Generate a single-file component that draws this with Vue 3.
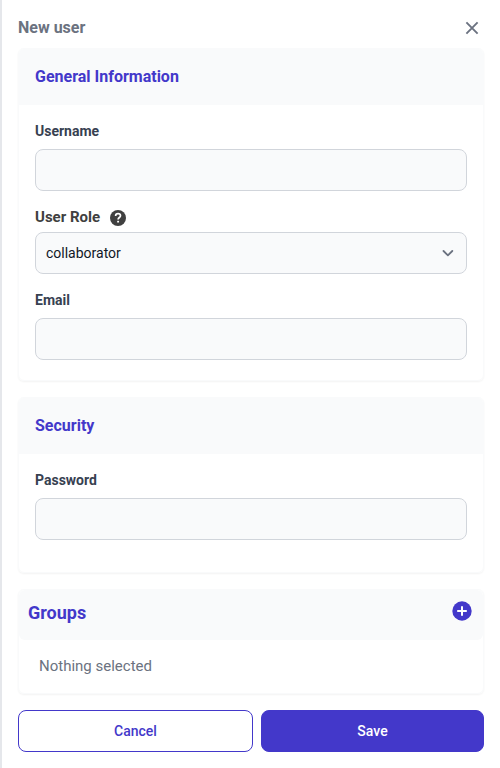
<script setup>
import { ref } from 'vue'

const username = ref('')
const email = ref('')
const password = ref('')
const role = ref('collaborator')
</script>

<template>
  <form class="drawer" @submit.prevent>
    <header class="top">
      <h5>New user</h5>
      <button type="button" class="close">
        <svg width="20" height="20" viewBox="0 0 20 20" fill="none" stroke="currentColor" stroke-width="1.9">
          <path d="M4.4 4.4 15.6 15.6M15.6 4.4 4.4 15.6" />
        </svg>
      </button>
    </header>

    <section class="card general">
      <h2 class="heading">General Information</h2>
      <div class="body">
        <label class="label" for="username">Username</label>
        <input id="username" v-model="username" class="control" type="text" />
        <div class="role-label">
          <span>User Role</span>
          <svg width="16" height="16" viewBox="0 0 16 16">
            <circle cx="8" cy="8" r="8" fill="#404040" />
            <path d="M5.600 6C5.600 4.500 6.600 3.700 8.050 3.700c1.450 0 2.450.8 2.450 2.050 0 1.750-2.400 1.750-2.400 3.650" fill="none" stroke="#fff" stroke-width="1.700" />
            <rect x="7.150" y="10.700" width="1.900" height="1.900" rx="0.500" fill="#fff" />
          </svg>
        </div>
        <div class="control select">
          <span>{{ role }}</span>
          <svg width="12" height="8" viewBox="0 0 12 8" fill="none" stroke="#6b7280" stroke-width="1.800" stroke-linecap="round" stroke-linejoin="round">
            <path d="M1.500 2 5.900 6.300l4.400-4.300" />
          </svg>
        </div>
        <label class="label email" for="email">Email</label>
        <input id="email" v-model="email" class="control" type="text" />
      </div>
    </section>

    <section class="card security">
      <h2 class="heading">Security</h2>
      <div class="body">
        <label class="label" for="password">Password</label>
        <input id="password" v-model="password" class="control" type="password" />
      </div>
    </section>

    <section class="card groups">
      <div class="groups-head">
        <h2>Groups</h2>
        <button type="button" class="add">
          <svg width="20" height="20" viewBox="0 0 20 20">
            <circle cx="10" cy="10" r="9.700" fill="#4338ca" />
            <path d="M10 5.200v9.600M5.200 10h9.600" stroke="#fff" stroke-width="2" />
          </svg>
        </button>
      </div>
      <p>Nothing selected</p>
    </section>

    <footer class="actions">
      <button type="button" class="button cancel">Cancel</button>
      <button type="submit" class="button save">Save</button>
    </footer>
  </form>
</template>

<style>
body {
  background: #fff;
}
</style>

<style scoped>
* {
  box-sizing: border-box;
  margin: 0;
}

.drawer {
  height: 768px;
  padding: 16px;
  border-left: 2px solid #e5e7eb;
  overflow: hidden;
  font: 14px/20px Roboto, sans-serif;
  color: #111827;
}

button {
  padding: 0;
  border: 0;
  background: none;
  font: inherit;
}

.top {
  display: flex;
  justify-content: space-between;
  height: 32px;
  padding-right: 2px;
}

.top h5 {
  font-size: 16px;
  font-weight: 700;
  line-height: 24px;
  color: #6b7280;
}

.close {
  display: flex;
  align-items: center;
  height: 24px;
  color: #6b7280;
}

.card {
  margin-bottom: 16px;
  border: 1px solid #f9fafb;
  border-radius: 6px;
  box-shadow: 0 1px 2px rgba(0, 0, 0, 0.05);
  overflow: hidden;
}

.general {
  height: 333px;
}

.security {
  height: 176px;
}

.groups {
  height: 105px;
}

.heading {
  height: 56px;
  padding: 16px;
  background: #f9fafb;
  color: #4338ca;
  font-size: 16px;
  font-weight: 700;
  line-height: 24px;
}

.body {
  padding: 16px;
}

.label {
  display: block;
  margin-bottom: 8px;
  font-weight: 700;
  color: #374151;
}

.control {
  display: block;
  width: 100%;
  height: 42px;
  padding: 10px;
  border: 1px solid #d1d5db;
  border-radius: 8px;
  background: #f9fafb;
  outline: 0;
  font: inherit;
  color: #111827;
}

.role-label {
  display: flex;
  align-items: center;
  gap: 10px;
  height: 20px;
  margin: 16px 0 5px;
  font-size: 15px;
  font-weight: 700;
  color: #404040;
}

.role-label svg {
  margin-top: 2px;
}

.select {
  display: flex;
  align-items: center;
  justify-content: space-between;
  padding-right: 12.5px;
}

.email {
  margin-top: 16px;
}

.groups-head {
  display: flex;
  align-items: center;
  justify-content: space-between;
  height: 50px;
  padding: 0 11px 0 9px;
  border-radius: 6px;
  background: #f9fafb;
  color: #4338ca;
}

.groups-head h2 {
  margin-bottom: 4px;
  font-size: 18px;
  font-weight: 700;
  line-height: 28px;
}

.add {
  display: flex;
  margin-bottom: 8px;
}

.groups p {
  padding: 14px 20px;
  color: #6b7280;
  font-size: 15px;
  line-height: 24px;
}

.actions {
  display: flex;
  gap: 8px;
}

.button {
  height: 42px;
  border: 1px solid #4338ca;
  border-radius: 8px;
  font-weight: 500;
}

.cancel {
  width: 235px;
  color: #4338ca;
}

.save {
  flex: 1;
  background: #4338ca;
  color: #fff;
}
</style>
